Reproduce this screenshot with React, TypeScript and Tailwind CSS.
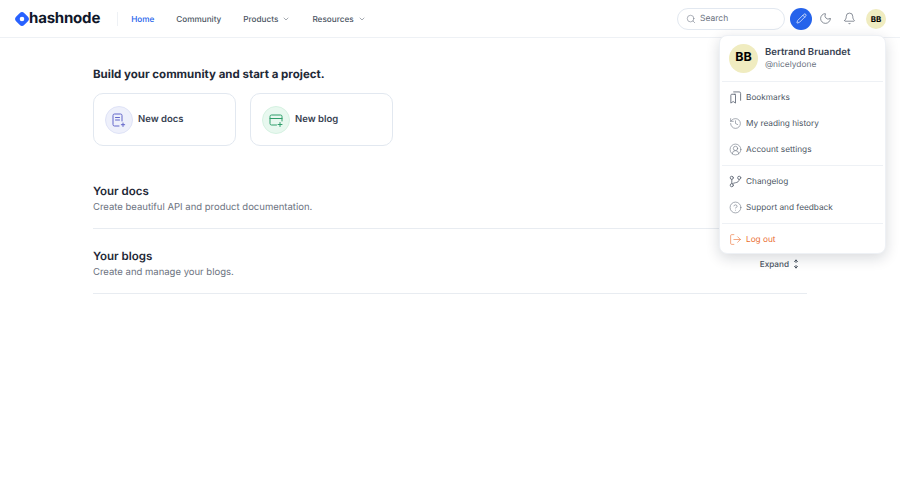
import { Bell, ChevronDown, CircleHelp, CircleUserRound, History, LogOut, Moon, Pencil, Search } from "lucide-react";

function BookmarksIcon() {
  return (
    <svg width="13" height="13" viewBox="0 0 14 14" fill="none" stroke="currentColor" strokeWidth="1" strokeLinecap="round" strokeLinejoin="round">
      <path d="M7 3.500H3a1 1 0 0 0-1 1v8.500l2.500-1.700L7 13V4.500a1 1 0 0 0-1-1" />
      <path d="M5 1h6a1.500 1.500 0 0 1 1.500 1.500V10" />
    </svg>
  );
}

function ChangelogIcon() {
  return (
    <svg width="13" height="13" viewBox="0 0 14 14" fill="none" stroke="currentColor" strokeWidth="1" strokeLinecap="round" strokeLinejoin="round">
      <circle cx="3" cy="3" r="1.700" />
      <circle cx="11" cy="3" r="1.700" />
      <circle cx="3" cy="11" r="1.700" />
      <path d="M3 4.700v4.600M11 4.700c0 2.500-2 3.300-4 3.600-1.600.3-2.800.7-3.300 1.200" />
    </svg>
  );
}

function DocsIcon() {
  return (
    <svg width="14" height="14" viewBox="0 0 14 14" fill="none" stroke="#6366c9" strokeWidth="1" strokeLinecap="round" strokeLinejoin="round">
      <path d="M7 13H2.500A1.500 1.500 0 0 1 1 11.500v-9A1.500 1.500 0 0 1 2.500 1h6A1.500 1.500 0 0 1 10 2.500V8" />
      <path d="M3.500 4.500h4M3.500 7h4M11 10v3.500M9.300 11.700h3.400" />
    </svg>
  );
}

function BlogIcon() {
  return (
    <svg width="14" height="14" viewBox="0 0 14 14" fill="none" stroke="#2f9e6b" strokeWidth="1" strokeLinecap="round" strokeLinejoin="round">
      <path d="M7.500 12H2.500A1.500 1.500 0 0 1 1 10.500v-7A1.500 1.500 0 0 1 2.500 2h9A1.500 1.500 0 0 1 13 3.500V8" />
      <path d="M1 5.500h12M11 9.500v4M9 11.500h4" />
    </svg>
  );
}

function ExpandIcon() {
  return (
    <svg width="8" height="10" viewBox="0 0 8 10" fill="none" stroke="currentColor" strokeWidth="1" strokeLinecap="round" strokeLinejoin="round">
      <path d="M2.500 2.500 4 1l1.500 1.500M4 1v2.500M2.500 7.500 4 9l1.500-1.500M4 9V6.500" />
    </svg>
  );
}

function NavLink({ label, active, caret }: { label: string; active?: boolean; caret?: boolean }) {
  return (
    <a className={`flex items-center gap-[4px] text-[8.200px] font-medium ${active ? "text-[#2563eb]" : "text-[#4b5563]"}`}>
      {label}
      {caret && <ChevronDown size={8} strokeWidth={1.5} />}
    </a>
  );
}

function MenuItem({ icon, label, danger }: { icon: React.ReactNode; label: string; danger?: boolean }) {
  return (
    <div className={`flex h-[26px] items-center gap-[4px] px-[7px] text-[8.250px] ${danger ? "text-[#ea6c2f]" : "text-[#4b5563]"}`}>
      <span className={`flex w-[13px] justify-center ${danger ? "" : "text-[#6b7280]"}`}>{icon}</span>
      {label}
    </div>
  );
}

function NewCard({ label, circle, icon }: { label: string; circle: string; icon: React.ReactNode }) {
  return (
    <div className="flex h-[53px] w-[143px] items-center gap-[5px] rounded-[10px] border border-[#e2e8f0] px-[11px]">
      <div className={`flex h-[28px] w-[28px] items-center justify-center rounded-full border ${circle}`}>{icon}</div>
      <span className="mt-px text-[9.500px] font-semibold text-[#374151]">{label}</span>
    </div>
  );
}

function Section({ title, text, expand }: { title: string; text: string; expand?: boolean }) {
  return (
    <div className="flex h-[65px] items-start justify-between border-b border-[#e8ecf1] pt-[20px]">
      <div>
        <h2 className="text-[11.500px] leading-[15px] font-semibold text-[#1f2937]">{title}</h2>
        <p className="mt-px text-[9.500px] leading-[15px] text-[#6b7280]">{text}</p>
      </div>
      {expand && (
        <div className="mt-[9px] flex items-center gap-[3px] pr-[7px] text-[8.200px] font-medium text-[#4b5563]">
          Expand
          <ExpandIcon />
        </div>
      )}
    </div>
  );
}

export default function App() {
  return (
    <div className="relative h-[484px] w-[900px] overflow-hidden bg-white font-['Inter',sans-serif] antialiased [text-rendering:geometricPrecision]">
      <header className="flex h-[38px] items-center border-b border-[#eef1f5] pr-[14px] pl-[15px]">
        <div className="flex items-center">
          <svg width="14" height="14" viewBox="0 0 14 14">
            <path fillRule="evenodd" fill="#2962ff" d="M1.300 4.600 4.600 1.300a3.300 3.300 0 0 1 4.800 0l3.300 3.300a3.300 3.300 0 0 1 0 4.800L9.400 12.700a3.300 3.300 0 0 1-4.800 0L1.300 9.400a3.300 3.300 0 0 1 0-4.800zM7 9.300a2.300 2.300 0 1 0 0-4.600 2.300 2.300 0 0 0 0 4.600z" />
          </svg>
          <span className="text-[15px] font-bold tracking-[-0.2px] text-[#0f172a]">hashnode</span>
        </div>
        <div className="mr-[13px] ml-[17px] h-[14px] w-px bg-[#eef1f5]" />
        <nav className="mt-px flex items-center gap-[22px]">
          <NavLink label="Home" active />
          <NavLink label="Community" />
          <NavLink label="Products" caret />
          <NavLink label="Resources" caret />
        </nav>
        <div className="ml-auto flex items-center">
          <div className="flex h-[22px] w-[108px] items-center gap-[4px] rounded-full border border-[#e2e8f0] px-[8px] text-[8.500px] text-[#6b7280]">
            <Search size={10} strokeWidth={1.3} />
            <span className="mt-px">Search</span>
          </div>
          <div className="ml-[5px] flex h-[22px] w-[22px] items-center justify-center rounded-full bg-[#2563eb] text-white">
            <Pencil size={11} strokeWidth={1.5} />
          </div>
          <Moon size={13} strokeWidth={1.2} className="ml-[7px] text-[#4b5563]" />
          <Bell size={13} strokeWidth={1.2} className="ml-[11px] text-[#4b5563]" />
          <div className="ml-[10px] flex h-[20px] w-[20px] items-center justify-center rounded-full bg-[#f0ecc0] text-[8px] font-bold text-black">BB</div>
        </div>
      </header>

      <main className="mx-auto w-[714px] pt-[27px]">
        <h1 className="text-[11.500px] leading-[18px] font-bold text-[#1f2937]">Build your community and start a project.</h1>
        <div className="mt-[10px] flex gap-[14px]">
          <NewCard label="New docs" circle="border-[#dfe3f7] bg-[#eef0fb]" icon={<DocsIcon />} />
          <NewCard label="New blog" circle="border-[#d6f2e2] bg-[#e8f8ef]" icon={<BlogIcon />} />
        </div>
        <div className="mt-[18px]">
          <Section title="Your docs" text="Create beautiful API and product documentation." />
          <Section title="Your blogs" text="Create and manage your blogs." expand />
        </div>
      </main>

      {/* profile dropdown */}
      <div className="absolute top-[35px] left-[719px] w-[167px] rounded-[8px] border border-[#eef1f5] bg-white px-[2px] shadow-[0_4px_14px_rgba(15,23,42,0.16)]">
        <div className="flex h-[46px] items-center gap-[7px] border-b border-[#eef1f5] px-[7px]">
          <div className="flex h-[29px] w-[29px] items-center justify-center rounded-full bg-[#f0ecc0] text-[12.500px] font-bold text-black">BB</div>
          <div>
            <div className="text-[9.600px] leading-[13px] font-semibold text-[#374151]">Bertrand Bruandet</div>
            <div className="text-[8.400px] leading-[13px] text-[#6b7280]">@nicelydone</div>
          </div>
        </div>
        <div className="border-b border-[#eef1f5] pt-[2px] pb-[3px]">
          <MenuItem icon={<BookmarksIcon />} label="Bookmarks" />
          <MenuItem icon={<History size={13} strokeWidth={1.1} />} label="My reading history" />
          <MenuItem icon={<CircleUserRound size={13} strokeWidth={1.1} />} label="Account settings" />
        </div>
        <div className="border-b border-[#eef1f5] pt-[2px] pb-[3px]">
          <MenuItem icon={<ChangelogIcon />} label="Changelog" />
          <MenuItem icon={<CircleHelp size={13} strokeWidth={1.1} />} label="Support and feedback" />
        </div>
        <div className="pt-[2px] pb-[1px]">
          <MenuItem danger icon={<LogOut size={13} strokeWidth={1.1} />} label="Log out" />
        </div>
      </div>
    </div>
  );
}
